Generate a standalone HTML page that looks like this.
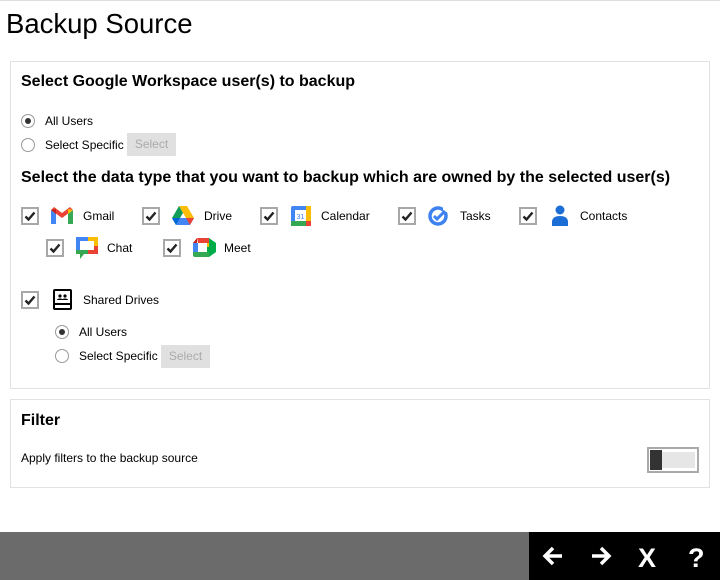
<!DOCTYPE html>
<html><head><meta charset="utf-8"><style>
*{margin:0;padding:0;box-sizing:border-box}
body{width:720px;height:580px;position:relative;background:#fff;font-family:"Liberation Sans",Arial,sans-serif;color:#000;overflow:hidden}
.a{position:absolute;white-space:nowrap}
.t{font-size:12px}
.h{font-size:16px;font-weight:bold}
.panel{position:absolute;border:1px solid #e2e2e2;background:#fff}
.cb{position:absolute;width:18px;height:18px;border:2px solid #a8a8a8;background:#fff}
.cb svg{position:absolute;left:1px;top:1px}
.rd{position:absolute;width:14px;height:14px;border:1px solid #9a9a9a;border-radius:50%;background:#fff}
.rd.on::after{content:"";position:absolute;left:3px;top:3px;width:6px;height:6px;border-radius:50%;background:#333}
.btn{position:absolute;background:#e0e0e0;color:#aaa;font-size:12px;text-align:center;line-height:23px}
</style></head><body>
<div class="a" style="left:0;top:0;width:720px;height:1px;background:#ddd"></div>
<div class="a" style="left:6px;top:8px;font-size:27.5px">Backup Source</div>

<div class="panel" style="left:10px;top:61px;width:700px;height:328px"></div>
<div class="a h" style="left:21px;top:73px">Select Google Workspace user(s) to backup</div>
<div class="rd on" style="left:21px;top:114px"></div><div class="a t" style="left:45px;top:114px">All Users</div>
<div class="rd" style="left:21px;top:138px"></div><div class="a t" style="left:45px;top:138px">Select Specific</div>
<div class="btn" style="left:127px;top:133px;width:49px;height:23px">Select</div>
<div class="a h" style="left:21px;top:169px">Select the data type that you want to backup which are owned by the selected user(s)</div>

<div class="cb" style="left:21px;top:207px"><svg width="12" height="12" viewBox="0 0 12 12"><path d="M1.5 6.5l3 3 6-7" stroke="#222" stroke-width="2.4" fill="none"/></svg></div>
<div class="cb" style="left:142px;top:207px"><svg width="12" height="12" viewBox="0 0 12 12"><path d="M1.5 6.5l3 3 6-7" stroke="#222" stroke-width="2.4" fill="none"/></svg></div>
<div class="cb" style="left:260px;top:207px"><svg width="12" height="12" viewBox="0 0 12 12"><path d="M1.5 6.5l3 3 6-7" stroke="#222" stroke-width="2.4" fill="none"/></svg></div>
<div class="cb" style="left:398px;top:207px"><svg width="12" height="12" viewBox="0 0 12 12"><path d="M1.5 6.5l3 3 6-7" stroke="#222" stroke-width="2.4" fill="none"/></svg></div>
<div class="cb" style="left:519px;top:207px"><svg width="12" height="12" viewBox="0 0 12 12"><path d="M1.5 6.5l3 3 6-7" stroke="#222" stroke-width="2.4" fill="none"/></svg></div>
<div class="cb" style="left:46px;top:239px"><svg width="12" height="12" viewBox="0 0 12 12"><path d="M1.5 6.5l3 3 6-7" stroke="#222" stroke-width="2.4" fill="none"/></svg></div>
<div class="cb" style="left:163px;top:239px"><svg width="12" height="12" viewBox="0 0 12 12"><path d="M1.5 6.5l3 3 6-7" stroke="#222" stroke-width="2.4" fill="none"/></svg></div>
<div class="cb" style="left:21px;top:291px"><svg width="12" height="12" viewBox="0 0 12 12"><path d="M1.5 6.5l3 3 6-7" stroke="#222" stroke-width="2.4" fill="none"/></svg></div>

<svg class="a" style="left:51px;top:207px" width="22" height="17" viewBox="0 0 22 17"><path d="M0 3v14h5V7z" fill="#4285f4"/><path d="M17 7v10h5V3z" fill="#34a853"/><path d="M0 3l11 8 11-8-3-3-8 6-8-6z" fill="#ea4335"/><path d="M17 2l5 1v0l-5 4z" fill="#fbbc04"/><path d="M0 3l5 4V2z" fill="#c5221f"/></svg>
<div class="a t" style="left:83px;top:209px">Gmail</div>
<svg class="a" style="left:172px;top:206px" width="22" height="19" viewBox="0 0 22 19"><path d="M4 19h14l4-7H8z" fill="#4285f4"/><path d="M15 0l7 12h-8L7 0z" fill="#fbbc04"/><path d="M7 0L0 12l4 7 7-12z" fill="#0f9d58"/><path d="M0 12l4 7 4-7z" fill="#0066da"/><path d="M14 12h8l-4 7z" fill="#ea4335"/></svg>
<div class="a t" style="left:204px;top:209px">Drive</div>
<svg class="a" style="left:291px;top:206px" width="20" height="20" viewBox="0 0 20 20"><rect width="20" height="20" rx="2" fill="#4285f4"/><rect x="0" y="15" width="15" height="5" fill="#34a853"/><rect x="15" y="0" width="5" height="15" fill="#fbbc04"/><rect x="15" y="15" width="5" height="5" fill="#ea4335"/><rect x="4" y="4" width="11" height="11" fill="#fff"/><text x="9.5" y="13" font-size="7" text-anchor="middle" fill="#4285f4" font-family="Liberation Sans">31</text></svg>
<div class="a t" style="left:321px;top:209px">Calendar</div>
<svg class="a" style="left:428px;top:205px" width="22" height="22" viewBox="0 0 22 22"><circle cx="10" cy="11" r="8" fill="none" stroke="#3d82f0" stroke-width="3.5"/><circle cx="18" cy="4" r="3" fill="#fff"/><path d="M6 11l3 3 8-8" stroke="#3d82f0" stroke-width="3" fill="none"/></svg>
<div class="a t" style="left:460px;top:209px">Tasks</div>
<svg class="a" style="left:551px;top:205px" width="18" height="22" viewBox="0 0 18 22"><circle cx="9" cy="5" r="4.5" fill="#1a6ed6"/><path d="M1 21v-4c0-4 3-6 8-6s8 2 8 6v4z" fill="#1a6ed6"/></svg>
<div class="a t" style="left:580px;top:209px">Contacts</div>
<svg class="a" style="left:76px;top:237px" width="22" height="23" viewBox="0 0 22 23"><path d="M0 2h22v15H8l-4 5v-5H0z" fill="#34a853"/><path d="M0 0h12v4H4v9H0z" fill="#4285f4"/><path d="M12 0h10v9h-4V4h-6z" fill="#fbbc04"/><path d="M18 9h4v8h-10v-4h6z" fill="#ea4335"/><rect x="4" y="4" width="14" height="9" fill="#fff"/></svg>
<div class="a t" style="left:107px;top:241px">Chat</div>
<svg class="a" style="left:193px;top:238px" width="23" height="19" viewBox="0 0 23 19"><path d="M0 5h5v9H0z" fill="#4285f4"/><path d="M4 0h12v5H5z" fill="#ea4335"/><path d="M0 5L4 0v5z" fill="#c5221f"/><path d="M0 14h16v5H2a2 2 0 01-2-2z" fill="#34a853"/><path d="M16 0v5h-2v9h2v5h0l7-5V5l-7-5z" fill="#00ac47"/><path d="M5 5h9v9H5z" fill="#fff"/><path d="M14 5h2v4h-2z" fill="#fbbc04"/></svg>
<div class="a t" style="left:224px;top:241px">Meet</div>
<svg class="a" style="left:53px;top:289px" width="19" height="21" viewBox="0 0 19 21"><rect x="1" y="1" width="17" height="19" rx="1" fill="none" stroke="#000" stroke-width="2"/><rect x="1" y="14" width="17" height="2" fill="#000"/><circle cx="7" cy="7" r="1.6"/><circle cx="12" cy="7" r="1.6"/><path d="M4 11c0-2 6-2 6 0zM9 11c0-2 6-2 6 0z"/></svg>
<div class="a t" style="left:83px;top:293px">Shared Drives</div>
<div class="rd on" style="left:55px;top:325px"></div><div class="a t" style="left:79px;top:325px">All Users</div>
<div class="rd" style="left:55px;top:349px"></div><div class="a t" style="left:79px;top:349px">Select Specific</div>
<div class="btn" style="left:161px;top:345px;width:49px;height:23px">Select</div>

<div class="panel" style="left:10px;top:399px;width:700px;height:89px"></div>
<div class="a h" style="left:21px;top:412px">Filter</div>
<div class="a t" style="left:21px;top:451px">Apply filters to the backup source</div>
<div class="a" style="left:647px;top:447px;width:52px;height:26px;border:2px solid #aaa;background:#fff">
<div class="a" style="left:1px;top:1px;width:12px;height:20px;background:#333"></div>
<div class="a" style="left:13px;top:3px;width:33px;height:16px;background:#e6e6e6"></div></div>

<div class="a" style="left:0;top:532px;width:529px;height:48px;background:#6b6b6b"></div>
<div class="a" style="left:529px;top:532px;width:191px;height:48px;background:#000"></div>
<svg class="a" style="left:541px;top:545px" width="24" height="22" viewBox="0 0 24 22"><path d="M21 11H5M12 3l-8 8 8 8" stroke="#fff" stroke-width="3.5" fill="none"/></svg>
<svg class="a" style="left:589px;top:545px" width="24" height="22" viewBox="0 0 24 22"><path d="M3 11h16M12 3l8 8-8 8" stroke="#fff" stroke-width="3.5" fill="none"/></svg>
<div class="a" style="left:638px;top:543px;color:#fff;font-size:27px;font-weight:bold">X</div>
<div class="a" style="left:688px;top:543px;color:#fff;font-size:27px;font-weight:bold">?</div>
</body></html>
